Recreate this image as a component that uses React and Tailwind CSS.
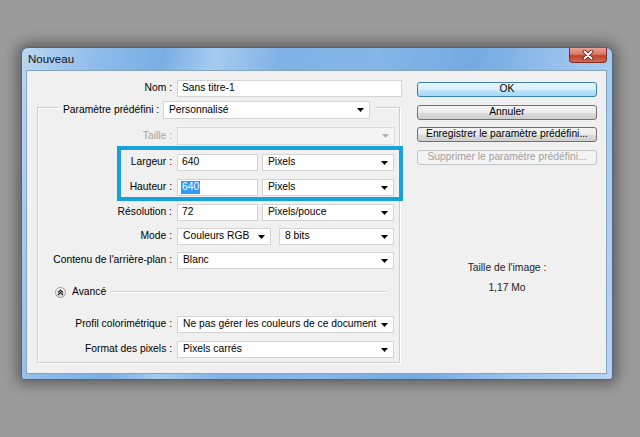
import React from 'react'

function Arrow({ disabled }) {
  return (
    <svg width="7" height="4" viewBox="0 0 7 4" className="shrink-0">
      <path d="M0 0H7L3.5 4Z" fill={disabled ? '#b4b4b4' : '#000'} />
    </svg>
  )
}

function Input({ className, children }) {
  return (
    <div className={'flex items-center bg-white border border-[#d4d4d4] pl-[4px] ' + className}>
      {children}
    </div>
  )
}

function Select({ className, children, disabled }) {
  return (
    <div
      className={
        'flex items-center justify-between border pl-[5px] pr-[5px] ' +
        (disabled ? 'bg-[#f4f4f4] border-[#dcdcdc] ' : 'bg-white border-[#d4d4d4] ') +
        className
      }
    >
      <span className="whitespace-nowrap">{children}</span>
      <Arrow disabled={disabled} />
    </div>
  )
}

function Row({ label, mt, children }) {
  return (
    <div className={'flex items-center h-[17px] ' + mt}>
      <div className="w-[134px] text-right whitespace-nowrap">{label}</div>
      <div className="ml-[5px] flex h-full">{children}</div>
    </div>
  )
}

function Button({ children, primary, disabled, mt }) {
  let look = 'border-[#707070] bg-[linear-gradient(#f3f3f3_0%,#ebebeb_50%,#dddddd_51%,#cfcfcf_100%)] text-black'
  if (primary) look = 'border-[#3c7fb1] bg-[linear-gradient(#eaf6fd_0%,#d9f0fc_50%,#bee6fd_51%,#a7d9f5_100%)] text-black'
  if (disabled) look = 'border-[#c2c5c7] bg-[#f4f4f4] text-[#a0a0a0]'
  return (
    <div className={'h-[15px] w-[180px] flex items-center justify-center rounded-[3px] border ' + look + ' ' + mt}>
      {children}
    </div>
  )
}

export default function App() {
  return (
    <div className="w-[640px] h-[437px] bg-[#9b9b9b] pt-[47px] pl-[21px] overflow-hidden font-['Liberation_Sans',Arial,sans-serif] text-[10.3px] text-black leading-none">
      <div className="w-[592px] h-[333px] flex flex-col rounded-t-[7px] rounded-b-[3px] border border-[#4a6684] bg-[linear-gradient(100deg,#b9d7f3_0%,#8dbbea_12%,#7aaee3_22%,#a6cbf0_30%,#80b2e6_40%,#86b6e7_55%,#74a9e1_70%,#9cc4ee_85%,#b6d4f2_100%)] shadow-[0_0_14px_4px_rgba(0,0,0,0.4)]">
        <div className="h-[23px] flex items-start justify-between">
          <div className="pl-[6px] pt-[6px] text-[11.5px] text-[#111]">Nouveau</div>
          <div className="mr-[5px] w-[38px] h-[15px] rounded-b-[4px] border border-t-0 border-[#7f2f24] bg-[linear-gradient(#e8a395_0%,#d87967_45%,#c4402a_55%,#cf6a55_100%)] flex items-center justify-center">
            <svg width="12" height="10" viewBox="0 0 12 10">
              <path d="M2.5 1.5L9.5 8.5M9.5 1.5L2.5 8.5" stroke="#5a1b12" strokeWidth="3.6" strokeLinecap="round" />
              <path d="M2.5 1.5L9.5 8.5M9.5 1.5L2.5 8.5" stroke="#ffffff" strokeWidth="2" strokeLinecap="round" />
            </svg>
          </div>
        </div>
        <div className="flex-1 pl-[5px] pr-[6px] pb-[6px]">
          <div className="relative w-[579px] h-[302px] bg-[#f0f0f0] shadow-[0_0_0_1px_#87a3c2] flex">
            <div className="w-[375px]">
              <div className="flex items-center h-[17px] mt-[9px]">
                <div className="w-[145px] text-right">Nom :</div>
                <Input className="ml-[5px] w-[225px] h-full">Sans titre-1</Input>
              </div>

              <div className="ml-[10px] w-[363px] mt-[10px] border border-[#cdcdcd] shadow-[inset_1px_1px_0_#ffffff,1px_1px_0_#ffffff] pb-[4px]">
                <div className="-mt-[7px] ml-[21px] flex w-fit items-center h-[18px] bg-[#f0f0f0] pl-[4px] pr-[5px]">
                  <div className="w-[95px] text-right whitespace-nowrap">Paramètre prédéfini :</div>
                  <Select className="ml-[5px] w-[207px] h-full">Personnalisé</Select>
                </div>

                <div className="flex items-center h-[18px] mt-[8px]">
                  <div className="w-[134px] text-right text-[#a3a3a3]">Taille :</div>
                  <Select disabled className="ml-[5px] w-[218px] h-full"></Select>
                </div>

                <Row label="Largeur :" mt="mt-[9px]">
                  <Input className="w-[81px]">640</Input>
                  <Select className="ml-[4px] w-[132px]">Pixels</Select>
                </Row>
                <Row label="Hauteur :" mt="mt-[8px]">
                  <Input className="w-[81px]">
                    <span className="bg-[#3399ff] text-white px-[1px] -ml-[1px] py-[1px]">640</span>
                  </Input>
                  <Select className="ml-[4px] w-[132px]">Pixels</Select>
                </Row>
                <Row label="Résolution :" mt="mt-[8px]">
                  <Input className="w-[81px]">72</Input>
                  <Select className="ml-[4px] w-[132px]">Pixels/pouce</Select>
                </Row>
                <Row label="Mode :" mt="mt-[7px]">
                  <Select className="w-[94px]">Couleurs RGB</Select>
                  <Select className="ml-[8px] w-[115px]">8 bits</Select>
                </Row>
                <Row label="Contenu de l'arrière-plan :" mt="mt-[7px]">
                  <Select className="w-[217px]">Blanc</Select>
                </Row>

                <div className="flex items-center h-[12px] mt-[17px]">
                  <div className="ml-[17px] w-[11px] h-[11px] rounded-full border border-[#9a9a9a] bg-[linear-gradient(#ffffff,#dcdcdc)] flex items-center justify-center">
                    <svg width="7" height="7" viewBox="0 0 7 7">
                      <path d="M1 3.5L3.5 1L6 3.5M1 6L3.5 3.5L6 6" stroke="#222" strokeWidth="1.2" fill="none" />
                    </svg>
                  </div>
                  <div className="ml-[6px]">Avancé</div>
                  <div className="flex-1 ml-[5px] mr-[13px] h-[2px] border-t border-[#d2d2d2] border-b border-b-white"></div>
                </div>

                <Row label="Profil colorimétrique :" mt="mt-[18px]">
                  <Select className="w-[217px]">Ne pas gérer les couleurs de ce document</Select>
                </Row>
                <Row label="Format des pixels :" mt="mt-[8px]">
                  <Select className="w-[217px]">Pixels carrés</Select>
                </Row>
              </div>
            </div>

            <div className="ml-[15px] w-[180px] pt-[11px] flex flex-col">
              <Button primary>OK</Button>
              <Button mt="mt-[8px]">Annuler</Button>
              <Button mt="mt-[7px]">Enregistrer le paramètre prédéfini...</Button>
              <Button disabled mt="mt-[8px]">Supprimer le paramètre prédéfini...</Button>
              <div className="mt-[98px] text-center text-[#222]">Taille de l'image :</div>
              <div className="mt-[10px] text-center text-[#222]">1,17 Mo</div>
            </div>

            <div className="absolute left-[90px] top-[75px] w-[286px] h-[55px] border-[4px] border-[#17a1dd]"></div>
          </div>
        </div>
      </div>
    </div>
  )
}
